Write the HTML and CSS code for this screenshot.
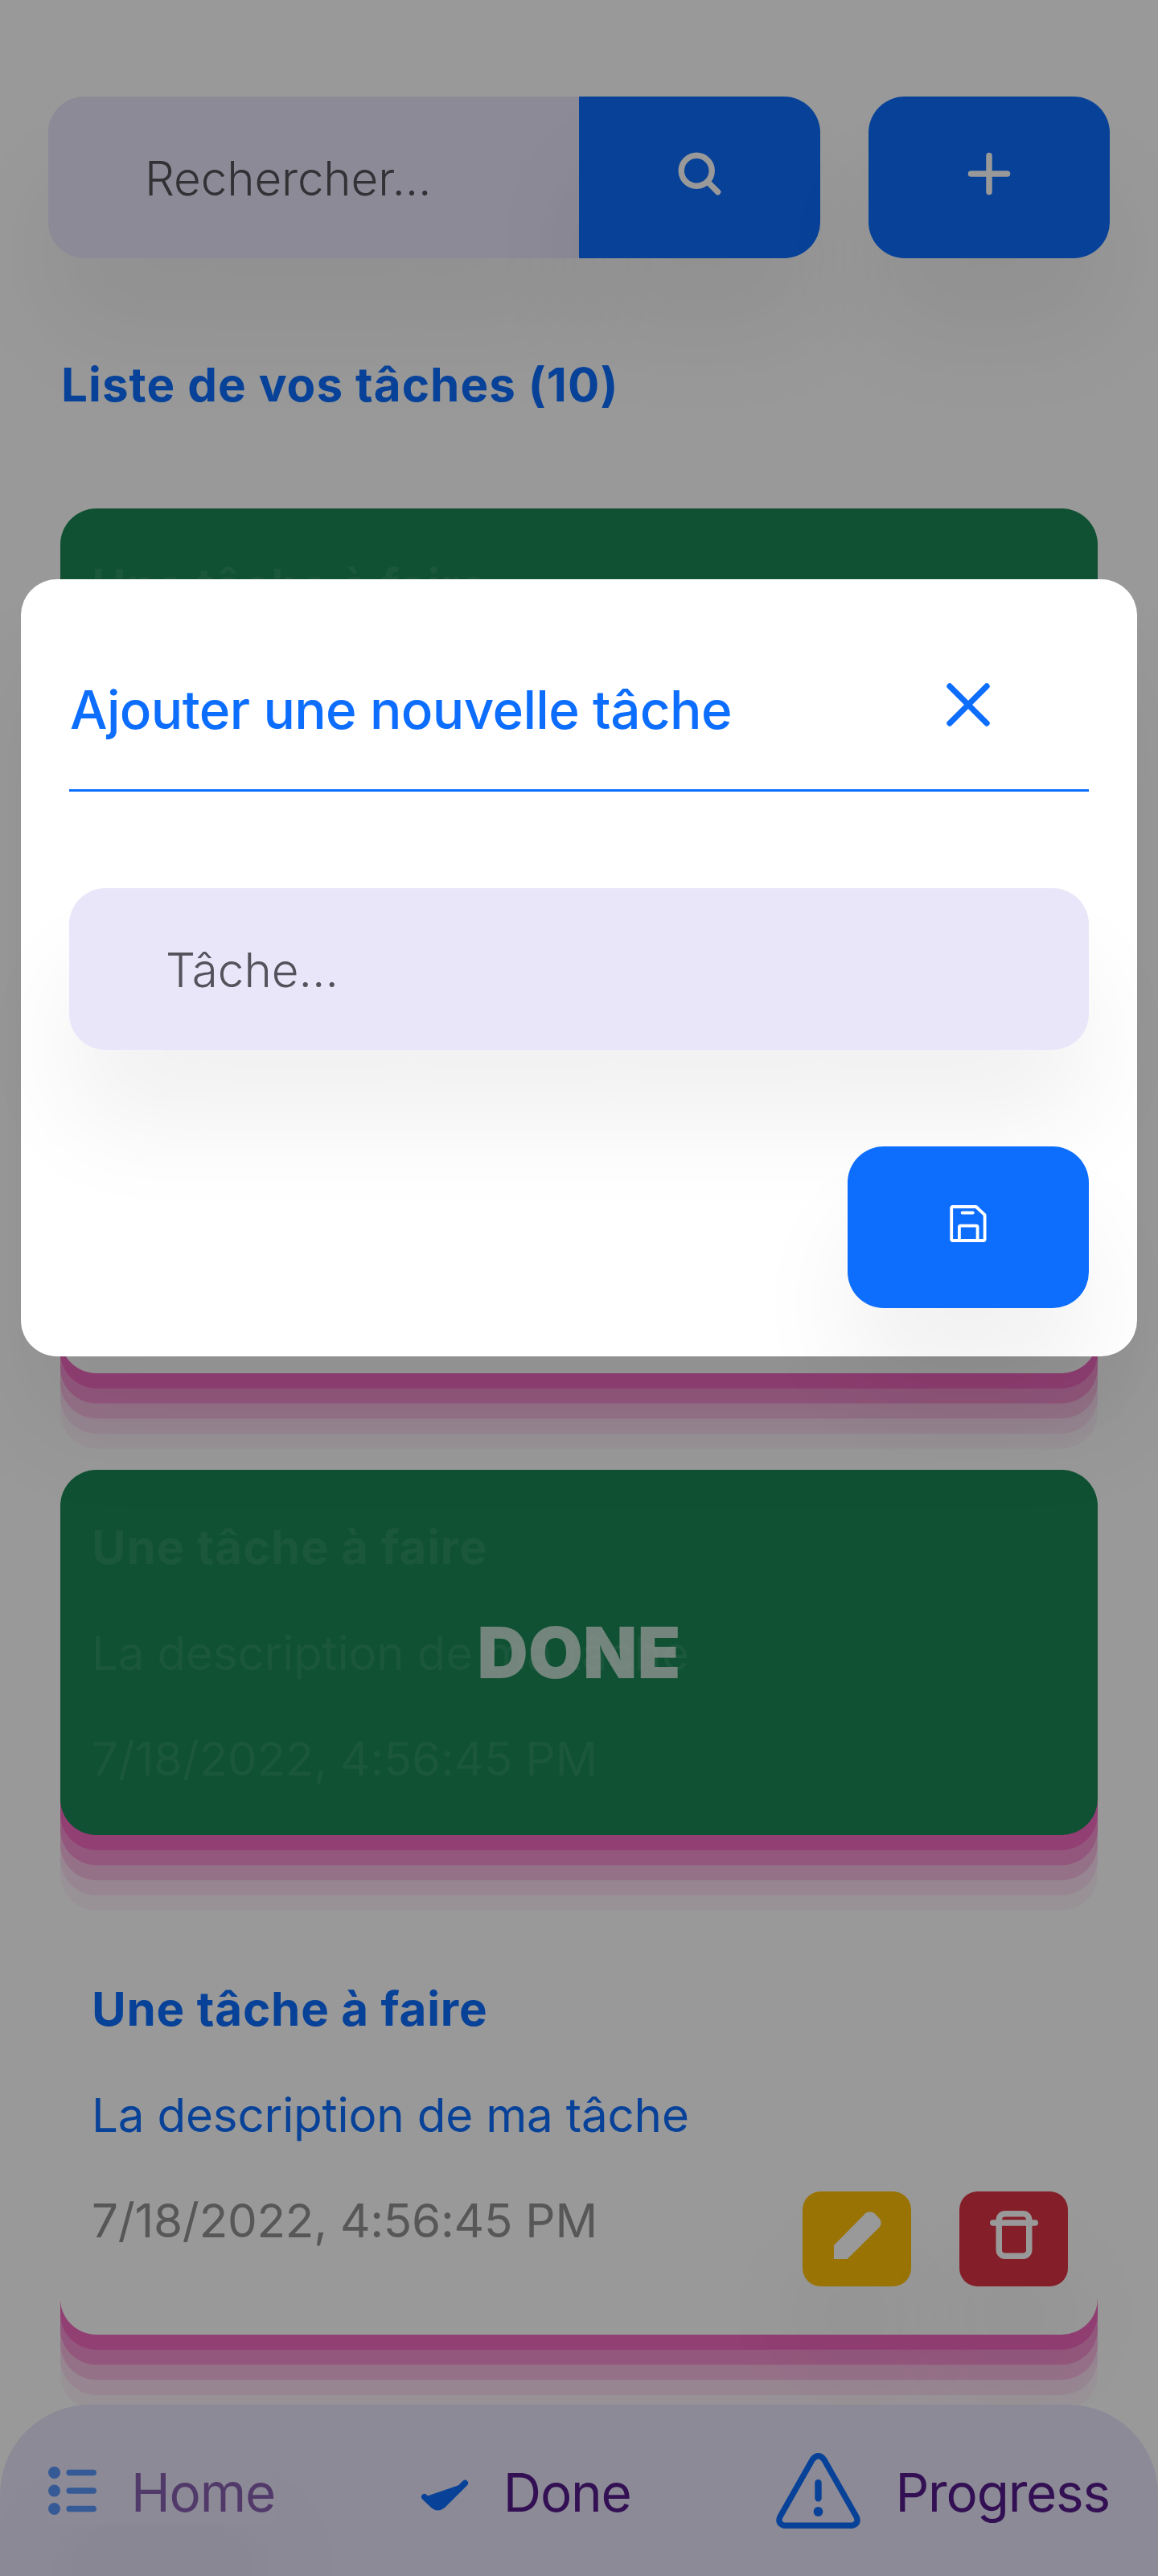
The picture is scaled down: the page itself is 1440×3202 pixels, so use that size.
FILE: index.html
```html
<!DOCTYPE html>
<html lang="fr">
<head>
<meta charset="utf-8">
<title>Liste de vos tâches</title>
<link rel="stylesheet" href="styles.css">
</head>
<body>
<main class="page">
  <header class="toolbar">
    <div class="search">
      <div class="field search-field">Rechercher...</div>
      <button class="btn btn-search" aria-label="Rechercher">
        <svg width="54" height="54" viewBox="0 0 54 54" fill="none" stroke="#fff" stroke-width="7.4" stroke-linecap="round"><circle cx="23.2" cy="23.2" r="19"/><path d="M37.5 37.5L49.6 49.6"/></svg>
      </button>
    </div>
    <button class="btn" aria-label="Ajouter">
      <svg width="54" height="54" viewBox="0 0 54 54" fill="none" stroke="#fff" stroke-width="7.5" stroke-linecap="round"><path d="M27 4.5V49.5M4.5 27H49.5"/></svg>
    </button>
  </header>

  <h1 class="heading">Liste de vos tâches (10)</h1>

  <section class="tasks">
    <article class="card card-done">
      <div class="card-text">
        <h2 class="task-title">Une tâche à faire</h2>
        <p class="task-desc">La description de ma tâche</p>
        <p class="task-date">7/18/2022, 4:56:45 PM</p>
      </div>
      <strong class="done-label">DONE</strong>
    </article>

    <article class="card card-open">
      <div class="card-text">
        <h2 class="task-title">Une tâche à faire</h2>
        <p class="task-desc">La description de ma tâche</p>
        <p class="task-date">7/18/2022, 4:56:45 PM</p>
      </div>
    </article>

    <article class="card card-done">
      <div class="card-text">
        <h2 class="task-title">Une tâche à faire</h2>
        <p class="task-desc">La description de ma tâche</p>
        <p class="task-date">7/18/2022, 4:56:45 PM</p>
      </div>
      <strong class="done-label">DONE</strong>
    </article>

    <article class="card card-open">
      <div class="card-text">
        <h2 class="task-title">Une tâche à faire</h2>
        <p class="task-desc">La description de ma tâche</p>
        <p class="task-date">7/18/2022, 4:56:45 PM</p>
      </div>
      <div class="actions">
        <button class="action action-edit" aria-label="Modifier">
          <svg width="60" height="60" viewBox="0 0 60 60" fill="#fff"><path d="M1 60V43L40.2 3.2Q45.8 -.8 51.4 3.2L57.5 9.4Q61.8 14.8 57.5 20.6L17.6 60Z"/></svg>
        </button>
        <button class="action action-delete" aria-label="Supprimer">
          <svg width="60" height="60" viewBox="0 0 60 60" fill="none" stroke="#fff" stroke-width="7.5" stroke-linecap="round"><rect x="11.25" y="3.75" width="37.5" height="52.5" rx="7.5"/><path d="M3.75 15H56.25"/></svg>
        </button>
      </div>
    </article>
  </section>
</main>

<nav class="tabbar">
  <a class="tab tab-current">
    <svg width="60" height="60" viewBox="0 0 60 60" fill="#0d6efd" stroke="#0d6efd" stroke-width="7.5" stroke-linecap="round"><g stroke="none"><circle cx="7.5" cy="7.5" r="7.5"/><circle cx="7.5" cy="30" r="7.5"/><circle cx="7.5" cy="52.5" r="7.5"/></g><path d="M26.2 7.5H56.2M26.2 30H56.2M26.2 52.5H56.2"/></svg>
    <span>Home</span>
  </a>
  <a class="tab">
    <svg width="60" height="60" viewBox="0 0 60 60" fill="#0d6efd" stroke="#0d6efd" stroke-width="7.6" stroke-linecap="round" stroke-linejoin="round"><path d="M4.8 37.7L15.5 48Q21.6 53 27.7 48L55.3 20.5" /></svg>
    <span>Done</span>
  </a>
  <a class="tab">
    <svg width="105" height="94" viewBox="0 0 105 94" fill="none" stroke="#0d6efd" stroke-width="7.4" stroke-linecap="round" stroke-linejoin="round"><path d="M45.3 8.2Q52.5 -.8 59.7 8.2L99.8 79Q103.8 87.5 95 90.2H10Q1.2 87.5 5.2 79Z"/><path d="M52.5 37.2V56.2" stroke-width="8.4"/><circle cx="52.5" cy="73" r="5.9" fill="#0d6efd" stroke="none"/></svg>
    <span>Progress</span>
  </a>
</nav>

<div class="backdrop"></div>

<div class="modal" role="dialog" aria-label="Ajouter une nouvelle tâche">
  <div class="modal-head">
    <h2 class="modal-title">Ajouter une nouvelle tâche</h2>
    <svg class="close" width="54" height="54" viewBox="0 0 54 54" fill="none" stroke="#0d6efd" stroke-width="7.4" stroke-linecap="round"><path d="M4 4L50 50M50 4L4 50"/></svg>
  </div>
  <div class="field modal-field">Tâche...</div>
  <button class="btn btn-save" aria-label="Enregistrer">
    <svg width="46" height="46" viewBox="0 0 46 46" fill="none" stroke="#fff" stroke-width="3.8" stroke-linecap="round" stroke-linejoin="round"><path d="M4 2H32.8L43.6 12.2V42.2Q43.6 44 41.8 44H4Q2.2 44 2.2 42.2V3.8Q2.2 2 4 2ZM11.9 43V27.2Q11.9 25.6 13.5 25.6H33Q34.6 25.6 34.6 27.2V43M15.6 9.5H28.8"/></svg>
  </button>
</div>
</body>
</html>
```
FILE: styles.css
```css
:root { --shadow: 0 94px 130px rgba(0, 0, 0, .058); }

* { box-sizing: border-box; }

body {
  margin: 0;
  width: 1440px;
  height: 3202px;
  position: relative;
  overflow: hidden;
  background: #fff;
  font-family: Inter, "Noto Sans", sans-serif;
  font-size: 58.3px;
}

h1, h2, p { margin: 0; font-size: inherit; }
svg { display: block; flex: none; }

button {
  border: 0;
  padding: 0;
  display: flex;
  align-items: center;
  justify-content: center;
}

.page { padding-top: 120px; }

.toolbar {
  display: flex;
  gap: 60px;
  padding: 0 60px;
}

.search { display: flex; flex: 1; }

.field {
  display: flex;
  align-items: center;
  height: 201px;
  padding: 2px 120px 0;
  border-radius: 45px;
  background: #e9e6fa;
  box-shadow: var(--shadow);
  color: #54525b;
  font-weight: 300;
}

.search-field {
  flex: 1;
  border-radius: 45px 0 0 45px;
  letter-spacing: -.13px;
}

.btn {
  flex: none;
  width: 300px;
  height: 201px;
  padding-bottom: 10px;
  border-radius: 45px;
  background: #0d6efd;
  box-shadow: var(--shadow);
}

.btn-search { border-radius: 0 45px 45px 0; }

.heading {
  padding: 112px 76px 109px;
  line-height: 90px;
  font-weight: 700;
  letter-spacing: 1.07px;
  color: #0d6efd;
}

.tasks {
  display: flex;
  flex-direction: column;
  gap: 120px;
  padding: 0 75px;
}

.card {
  position: relative;
  display: flex;
  justify-content: space-between;
  padding: 31px 37px 0 39px;
  border-radius: 45px;
  background: #fff;
  box-shadow:
    rgba(240, 46, 170, .4) 0 18.75px,
    rgba(240, 46, 170, .3) 0 37.5px,
    rgba(240, 46, 170, .2) 0 56.25px,
    rgba(240, 46, 170, .1) 0 75px,
    rgba(240, 46, 170, .05) 0 93.75px;
  line-height: 131.5px;
  color: #0d6efd;
}

.card-open { height: 501px; }

.card-done {
  height: 454px;
  background: #198754;
  color: rgba(255, 255, 255, .09);
}

.task-title { font-weight: 700; letter-spacing: .82px; }
.task-desc { letter-spacing: -.19px; }
.task-date { letter-spacing: -.23px; }
.card-open .task-date { color: #919191; }

.done-label {
  position: absolute;
  inset: 0;
  display: flex;
  align-items: center;
  justify-content: center;
  padding-top: 2px;
  font-size: 87.5px;
  font-weight: 900;
  letter-spacing: .3px;
  color: rgba(255, 255, 255, .73);
}

.actions {
  display: flex;
  align-self: flex-end;
  gap: 60px;
  padding-bottom: 60px;
}

.action {
  width: 135px;
  height: 118px;
  padding-bottom: 10px;
  border-radius: 22.5px;
  box-shadow: var(--shadow);
}

.action-edit { background: #ffc107; }
.action-delete { background: #dc3545; }

.tabbar {
  position: absolute;
  inset: auto 0 0;
  height: 213px;
  display: flex;
  align-items: center;
  justify-content: space-between;
  padding: 0 60px;
  border-radius: 112px 112px 0 0;
  background: #e9e6fa;
  font-size: 65.6px;
  letter-spacing: -1.2px;
}

.tab {
  display: flex;
  align-items: center;
  gap: 43px;
  color: #551a8b;
}

.tab span { padding-top: 5px; }
.tab-current { opacity: .65; box-shadow: var(--shadow); }

.backdrop {
  position: absolute;
  inset: 0;
  background: rgba(0, 0, 0, .4);
}

.modal {
  position: absolute;
  top: 720px;
  left: 26px;
  right: 26px;
  height: 966px;
  padding: 0 60px;
  display: flex;
  flex-direction: column;
  border-radius: 45px;
  background: #fff;
  box-shadow: var(--shadow);
}

.modal-head {
  display: flex;
  justify-content: space-between;
  align-items: flex-start;
  height: 264px;
  padding: 117px 123px 0 1px;
  border-bottom: 3px solid #0d6efd;
}

.modal-title {
  font-size: 65.6px;
  line-height: 90px;
  font-weight: 500;
  letter-spacing: -.6px;
  color: #0d6efd;
}

.close { margin-top: 12px; }
.modal-field { margin-top: 120px; }
.btn-save { margin-top: 120px; align-self: flex-end; padding-bottom: 9px; }
```
